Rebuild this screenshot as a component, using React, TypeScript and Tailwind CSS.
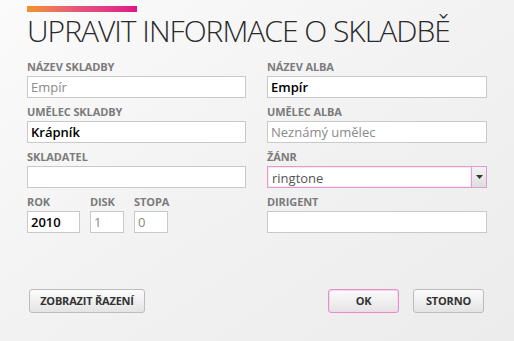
import React from "react";

const font = { fontFamily: '"Open Sans", "Noto Sans", "Liberation Sans", sans-serif' };

function Label({ children }: { children: React.ReactNode }) {
  return (
    <div className="h-[14px] leading-[14px] text-[11px] font-bold text-[#7b7b7b] mb-[2px] whitespace-nowrap tracking-[-0.1px]">
      {children}
    </div>
  );
}

function Input({ value, muted, bold, className = "" }: { value?: string; muted?: boolean; bold?: boolean; className?: string }) {
  return (
    <div
      className={
        "h-[22px] border border-[#c9c9c9] bg-white px-[3px] leading-[20px] text-[13px] whitespace-nowrap overflow-hidden " +
        (muted ? "text-[#8a8a8a] font-normal " : "text-black ") +
        (bold ? "font-semibold " : "") +
        className
      }
    >
      {value}
    </div>
  );
}

function Field({ label, children }: { label: string; children: React.ReactNode }) {
  return (
    <div className="flex flex-col">
      <Label>{label}</Label>
      {children}
    </div>
  );
}

function Button({ children, primary, className = "" }: { children: React.ReactNode; primary?: boolean; className?: string }) {
  return (
    <div
      className={
        "h-[24px] rounded-[3px] border bg-gradient-to-b from-[#fbfbfb] to-[#e4e4e4] flex items-center justify-center text-[11px] font-bold text-[#333] tracking-[-0.2px] " +
        (primary ? "border-[#e58fc6] shadow-[inset_0_0_0_1px_#f7d6ea] " : "border-[#bcbcbc] ") +
        className
      }
    >
      {children}
    </div>
  );
}

export default function App() {
  return (
    <div
      style={font}
      className="w-[514px] h-[341px] overflow-hidden bg-gradient-to-br from-[#fbfbfb] via-[#f2f2f2] to-[#ececec] pl-[27px] pr-[27px] pt-[6px]"
    >
      <div className="w-[110px] h-[6px] bg-gradient-to-r from-[#f39222] via-[#e2507c] to-[#e0108a]" />
      <div className="mt-[3px] h-[32px] leading-[32px] text-[30px] font-light text-[#2a2a2a] whitespace-nowrap tracking-[-1px]">
        UPRAVIT INFORMACE O SKLADBĚ
      </div>
      <div className="mt-[13px] grid grid-cols-[219px_220px] gap-x-[21px] gap-y-[7px]">
        <Field label="NÁZEV SKLADBY">
          <Input value="Empír" muted />
        </Field>
        <Field label="NÁZEV ALBA">
          <Input value="Empír" bold />
        </Field>
        <Field label="UMĚLEC SKLADBY">
          <Input value="Krápník" bold />
        </Field>
        <Field label="UMĚLEC ALBA">
          <Input value="Neznámý umělec" muted />
        </Field>
        <Field label="SKLADATEL">
          <Input />
        </Field>
        <Field label="ŽÁNR">
          <div className="h-[22px] border border-[#e39ad0] bg-white flex">
            <div className="flex-1 px-[3px] leading-[20px] text-[13px] text-[#555] border border-[#fbe6f3]">ringtone</div>
            <div className="w-[15px] border-l border-[#d9a6c9] bg-gradient-to-b from-[#f4f4f4] to-[#dedede] flex items-center justify-center">
              <svg width="7" height="4" viewBox="0 0 7 4">
                <path d="M0 0 H7 L3.5 4 Z" fill="#333" />
              </svg>
            </div>
          </div>
        </Field>
        <div className="flex gap-[10px]">
          <Field label="ROK">
            <Input value="2010" bold className="w-[53px]" />
          </Field>
          <Field label="DISK">
            <Input value="1" muted className="w-[34px]" />
          </Field>
          <Field label="STOPA">
            <Input value="0" muted className="w-[34px]" />
          </Field>
        </div>
        <Field label="DIRIGENT">
          <Input />
        </Field>
      </div>
      <div className="mt-[56px] flex items-center pl-[2px] pr-[3px]">
        <Button className="w-[116px]">ZOBRAZIT ŘAZENÍ</Button>
        <div className="flex-1" />
        <Button primary className="w-[71px]">OK</Button>
        <Button className="w-[71px] ml-[14px]">STORNO</Button>
      </div>
    </div>
  );
}
